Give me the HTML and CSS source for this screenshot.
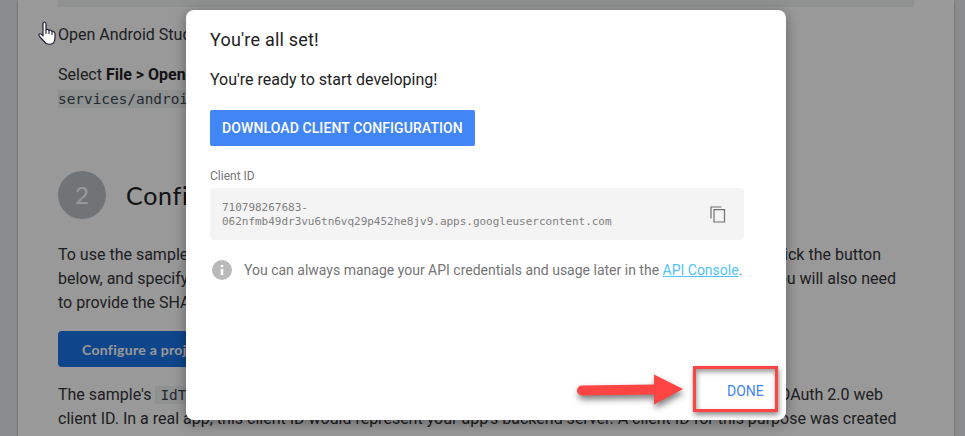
FILE: index.html
```html
<!DOCTYPE html>
<html lang="en">
<head>
<meta charset="utf-8">
<title>Start integrating</title>
<link rel="stylesheet" href="styles.css">
</head>
<body>
<main class="page">
  <div class="sample"></div>
  <p class="open"><span>Open Android Studio.</span></p>
  <p class="select"><span>Select <b>File &gt; Open</b></span><span><code>services/android</code></span></p>
  <h2 class="step"><span class="num">2</span><span class="step-title">Configure</span></h2>
  <p class="usage">
    <span class="row"><span>To use the sample,</span><span class="tail t1">click the button</span></span>
    <span class="row"><span>below, and specify</span><span class="tail t2">You will also need</span></span>
    <span class="row"><span>to provide the SHA-1</span></span>
  </p>
  <button class="configure">Configure a project</button>
  <p class="purpose">
    <span class="row"><span>The sample's <code class="inline">IdToken</code></span><span class="tail t3">OAuth 2.0 web</span></span>
    <span class="row">client ID. In a real app, this client ID would represent your app's backend server. A client ID for this purpose was created</span>
  </p>
</main>
<div class="scrim">
  <section class="dialog">
    <h1>You're all set!</h1>
    <p class="ready">You're ready to start developing!</p>
    <button class="download">DOWNLOAD CLIENT CONFIGURATION</button>
    <div class="label">Client ID</div>
    <div class="client">
      <span class="id">710798267683-<br>062nfmb49dr3vu6tn6vq29p452he8jv9.apps.googleusercontent.com</span>
      <svg class="copy" width="16" height="18" viewBox="0 0 16 18"><path d="M1 12.5V1H11.5M4 3.7H14.5V16H4Z" fill="none" stroke="#707070" stroke-width="1.2"/></svg>
    </div>
    <div class="note">
      <svg width="20" height="20" viewBox="0 0 20 20"><circle cx="10" cy="10" r="10" fill="#b9b9b9"/><path d="M8.7 5h2.6v2.3H8.7zM8.7 9h2.6v6H8.7z" fill="#fff"/></svg>
      <span>You can always manage your API credentials and usage later in the <a>API Console</a>.</span>
    </div>
    <div class="actions">
      <svg class="arrow" width="108" height="34" viewBox="0 0 108 34"><path d="M6 11.5 78 10.5V.5L107 15 78 30.5V20.5L6 21.5A5 5 0 0 1 6 11.5Z" fill="#ff4444"/></svg>
      <div class="done">DONE</div>
    </div>
  </section>
</div>
<svg class="cursor" width="19" height="25" viewBox="0 0 19 25"><path d="M5 15V3Q5 1 6.5 1T8 3V9Q10 7.5 11 9.5Q13 8.5 14 10.5Q16.5 10 17 12.5V17Q17 20 15 22.5Q11 24 8 22.5L2 16Q0 13.5 1.7 12.8Q3 12.5 5 15Z" fill="#fff" stroke="#202038" stroke-width="1.2" stroke-linejoin="round"/><path d="M8 9V13M11 9.5V13M14 10.5V14" stroke="#202038" stroke-width="1.1"/></svg>
</body>
</html>
```

FILE: styles.css
```css
* { box-sizing: border-box; }
body {
  margin: 0;
  height: 436px;
  overflow: hidden;
  background: #e8eaed;
  font: 16px/24px Roboto, sans-serif;
  color: #323438;
}
p, h1, h2 { margin: 0; font-weight: 400; }
button { border: 0; text-align: left; white-space: nowrap; }
.page {
  width: 936px;
  height: 436px;
  margin-left: 18px;
  padding: 0 40px;
  overflow: hidden;
  background: #fff;
  box-shadow: 0 1px 2px rgba(60, 64, 67, .55);
}
.sample { height: 7px; background: #f1f3f2; }
.open { margin-top: 16px; }
.select { margin-top: 16px; }
.select span { display: block; }
b { font-weight: 700; color: #202124; }
code {
  padding: 1px 0;
  background: #f1f3f4;
  color: #37474f;
  font: 14.4px/19px "DejaVu Sans Mono", monospace;
}
code.inline { padding: 1px 5px; }
.step { display: flex; align-items: center; gap: 20px; margin-top: 60px; height: 48px; }
.num {
  width: 48px;
  height: 48px;
  border-radius: 50%;
  background: #bdc1c6;
  color: #fff;
  font: 24px/48px Lato, sans-serif;
  text-align: center;
}
.step-title { font: 25px/32px Lato, sans-serif; letter-spacing: .7px; color: #202124; }
.usage { margin-top: 24px; }
.row { display: flex; justify-content: space-between; white-space: nowrap; }
.t1 { margin-right: 33px; }
.t2 { margin-right: 18px; }
.t3 { margin-right: 31px; }
.configure {
  display: block;
  width: 190px;
  height: 36px;
  margin-top: 16px;
  padding: 0 24px;
  border-radius: 4px;
  background: #1a73e8;
  color: #fff;
  font: 700 14px/35px Lato, sans-serif;
  letter-spacing: .3px;
}
.purpose { margin-top: 16px; }
.scrim {
  position: absolute;
  inset: 0;
  padding: 10px 0 0 186px;
  background: rgba(0, 0, 0, .4);
}
.dialog {
  width: 600px;
  height: 410px;
  padding: 17px 24px 0;
  border-radius: 8px;
  background: #fff;
  box-shadow: 0 3px 14px rgba(0, 0, 0, .35);
  color: #212121;
}
.dialog h1 { font-size: 18px; line-height: 26px; letter-spacing: .2px; }
.ready { margin-top: 15px; }
.download {
  display: block;
  width: 265px;
  height: 36px;
  margin-top: 18px;
  padding: 0 12px;
  border-radius: 2px;
  background: #4285f4;
  color: #fff;
  font: 500 14px/34px Roboto, sans-serif;
  letter-spacing: .1px;
}
.label { margin-top: 21px; font-size: 12px; line-height: 18px; color: #757575; }
.client {
  display: flex;
  align-items: center;
  justify-content: space-between;
  width: 534px;
  height: 52px;
  margin-top: 3px;
  padding: 1px 18px 0 12px;
  border-radius: 4px;
  background: #f4f4f4;
}
.id { padding-top: 1px; font: 11px/14px "DejaVu Sans Mono", monospace; letter-spacing: -.02px; color: #808080; }
.note {
  display: flex;
  align-items: center;
  gap: 12px;
  margin: 18px 0 0 2px;
  font-size: 14px;
  color: #757575;
}
.note a { color: #4fc3f7; text-decoration: underline; }
.actions {
  display: flex;
  align-items: flex-start;
  justify-content: flex-end;
  margin: 84px -16px 0 0;
}
.arrow { margin: 8px 9px 0 0; overflow: visible; filter: drop-shadow(1px 4px 3px rgba(0, 0, 0, .5)); }
.done {
  width: 85px;
  height: 46px;
  padding-left: 31px;
  border: 3px solid #ff4444;
  color: #4285f4;
  font-size: 14px;
  line-height: 44px;
  box-shadow: 1px 3px 5px rgba(0, 0, 0, .45), inset 1px 3px 5px rgba(0, 0, 0, .4);
}
.cursor { position: absolute; left: 38px; top: 21px; }
```
